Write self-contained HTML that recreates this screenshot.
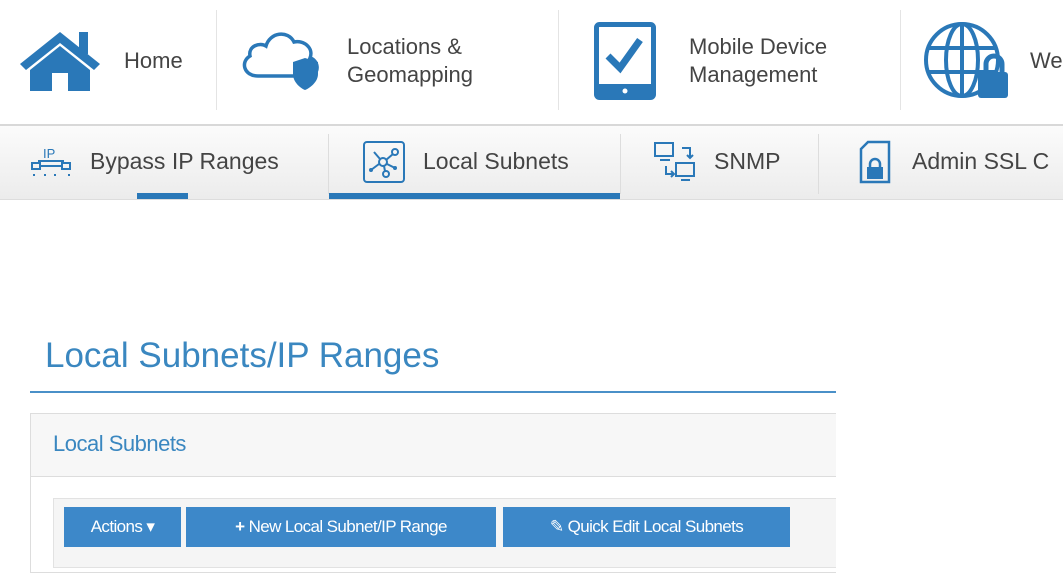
<!DOCTYPE html>
<html><head><style>
*{margin:0;padding:0;box-sizing:border-box}
body{width:1063px;height:560px;overflow:hidden;background:#fff;font-family:"Liberation Sans",sans-serif;position:relative}
.a{position:absolute}
.t{color:#444;font-size:22px;line-height:28px}
.s{color:#444;font-size:23px}
.sep{position:absolute;width:1px;background:#e4e4e4}
.btn{position:absolute;top:507px;height:40px;background:#3d88c9;color:#fff;font-size:17px;line-height:40px;text-align:center;letter-spacing:-0.6px}
</style></head><body>
<svg class="a" style="left:18px;top:28px" width="84" height="66" viewBox="0 0 84 66"><path d="M2 36 L42 4 L82 36 L76 42 L42 15 L8 42Z" fill="#2a78b8"/><rect x="61" y="4" width="9" height="22" fill="#2a78b8"/><path d="M12 42 L42 18 L72 42 V63 H50 V45 H34 V63 H12Z" fill="#2a78b8"/></svg>
<div class="a t" style="left:124px;top:47px">Home</div>
<div class="sep" style="left:216px;top:10px;height:100px"></div>
<svg class="a" style="left:238px;top:28px" width="90" height="64" viewBox="0 0 90 64"><path d="M20 48 H60 M20 48 C6 48 2 34 12 28 C10 18 22 14 28 18 C32 4 50 2 56 14 C66 12 76 20 72 30 C80 32 82 44 74 48" fill="none" stroke="#2a78b8" stroke-width="3.5"/><path d="M55 34 L67 30 L80 34 V46 C80 54 72 60 67 62 C62 60 55 54 55 46Z" fill="#2a78b8"/></svg>
<div class="a t" style="left:347px;top:33px">Locations &amp;<br>Geomapping</div>
<div class="sep" style="left:558px;top:10px;height:100px"></div>
<svg class="a" style="left:594px;top:22px" width="62" height="78" viewBox="0 0 62 78"><rect x="2.5" y="2.5" width="57" height="73" rx="3" fill="none" stroke="#2a78b8" stroke-width="5"/><rect x="2" y="62" width="58" height="14" fill="#2a78b8"/><circle cx="31" cy="69" r="2.5" fill="#fff"/><path d="M14 34 L26 46 L46 18" fill="none" stroke="#2a78b8" stroke-width="7"/></svg>
<div class="a t" style="left:689px;top:33px">Mobile Device<br>Management</div>
<div class="sep" style="left:900px;top:10px;height:100px"></div>
<svg class="a" style="left:922px;top:22px" width="90" height="78" viewBox="0 0 90 78"><g fill="none" stroke="#2a78b8" stroke-width="4"><circle cx="40" cy="38" r="36"/><ellipse cx="40" cy="38" rx="16" ry="36"/><path d="M40 2 V74 M6 26 H74 M6 50 H74"/></g><path d="M64 50 V42 A8 8 0 0 1 80 42 V50" fill="none" stroke="#2a78b8" stroke-width="5"/><rect x="56" y="50" width="30" height="26" rx="3" fill="#2a78b8"/></svg>
<div class="a t" style="left:1030px;top:47px">We</div>
<div class="a" style="left:0;top:124px;width:1063px;height:76px;background:linear-gradient(#fbfbfb,#ececec);border-top:2px solid #d8d8d8;border-bottom:1px solid #ddd"></div>
<svg class="a" style="left:30px;top:145px" width="44" height="34" viewBox="0 0 44 34"><text x="13" y="13" font-size="13" fill="#2a78b8" font-family="Liberation Sans">IP</text><path d="M8 16 H34" stroke="#2a78b8" stroke-width="2"/><rect x="2" y="18" width="8" height="6" fill="none" stroke="#2a78b8" stroke-width="2"/><rect x="32" y="18" width="8" height="6" fill="none" stroke="#2a78b8" stroke-width="2"/><path d="M10 21 H32" stroke="#2a78b8" stroke-width="2"/><path d="M3 30h2M14 30h2M24 30h2M38 30h2" stroke="#2a78b8" stroke-width="2"/></svg>
<div class="a s" style="left:90px;top:148px">Bypass IP Ranges</div>
<div class="a" style="left:137px;top:193px;width:51px;height:6px;background:#2a78b8"></div>
<div class="sep" style="left:328px;top:134px;height:60px;background:#ddd"></div>
<svg class="a" style="left:362px;top:140px" width="44" height="44" viewBox="0 0 44 44"><rect x="2" y="2" width="40" height="40" rx="3" fill="none" stroke="#2a78b8" stroke-width="2"/><g stroke="#2a78b8" stroke-width="2" fill="none"><circle cx="21" cy="22" r="4"/><circle cx="33" cy="12" r="3"/><circle cx="24" cy="34" r="3"/><path d="M12 12L18 19M24 20L31 14M22 26L23 31M17 24L9 30M25 24L33 28"/></g><circle cx="9" cy="30" r="2" fill="#2a78b8"/><circle cx="33" cy="28" r="2" fill="#2a78b8"/></svg>
<div class="a s" style="left:423px;top:148px">Local Subnets</div>
<div class="a" style="left:329px;top:193px;width:291px;height:6px;background:#2a78b8"></div>
<div class="sep" style="left:620px;top:134px;height:60px;background:#ddd"></div>
<svg class="a" style="left:652px;top:140px" width="46" height="44" viewBox="0 0 46 44"><g fill="none" stroke="#2a78b8" stroke-width="2"><rect x="3" y="3" width="18" height="13"/><rect x="24" y="23" width="18" height="13"/><path d="M8 20H18M29 40H38M30 8H38V18M35 15l3 3 3-3M14 26V34H22M19 31l3 3-3 3"/></g></svg>
<div class="a s" style="left:714px;top:148px">SNMP</div>
<div class="sep" style="left:818px;top:134px;height:60px;background:#ddd"></div>
<svg class="a" style="left:858px;top:140px" width="34" height="44" viewBox="0 0 34 44"><path d="M10 2H31V42H3V9Z" fill="none" stroke="#2a78b8" stroke-width="2.5"/><path d="M12 28V24A5 5 0 0 1 22 24V28" fill="none" stroke="#2a78b8" stroke-width="2.5"/><rect x="9" y="27" width="16" height="12" fill="#2a78b8"/></svg>
<div class="a s" style="left:912px;top:148px">Admin SSL C</div>
<div class="a" style="left:45px;top:336px;font-size:35px;color:#3a87c0">Local Subnets/IP Ranges</div>
<div class="a" style="left:30px;top:391px;width:806px;height:2px;background:#4a90c8"></div>
<div class="a" style="left:30px;top:413px;width:806px;height:160px;overflow:hidden;border:1px solid #ddd;border-right:none;background:#fff">
  <div class="a" style="left:0;top:0;width:806px;height:63px;background:#f7f7f7;border-bottom:1px solid #ddd"></div>
  <div class="a" style="left:22px;top:84px;width:790px;height:70px;background:#f5f5f5;border:1px solid #e2e2e2"></div>
</div>
<div class="a" style="left:53px;top:431px;font-size:22px;color:#3a87c0;letter-spacing:-0.5px">Local Subnets</div>
<div class="btn" style="left:64px;width:117px">Actions ▾</div>
<div class="btn" style="left:186px;width:310px"><b>+</b> New Local Subnet/IP Range</div>
<div class="btn" style="left:503px;width:287px">✎ Quick Edit Local Subnets</div>
</body></html>
